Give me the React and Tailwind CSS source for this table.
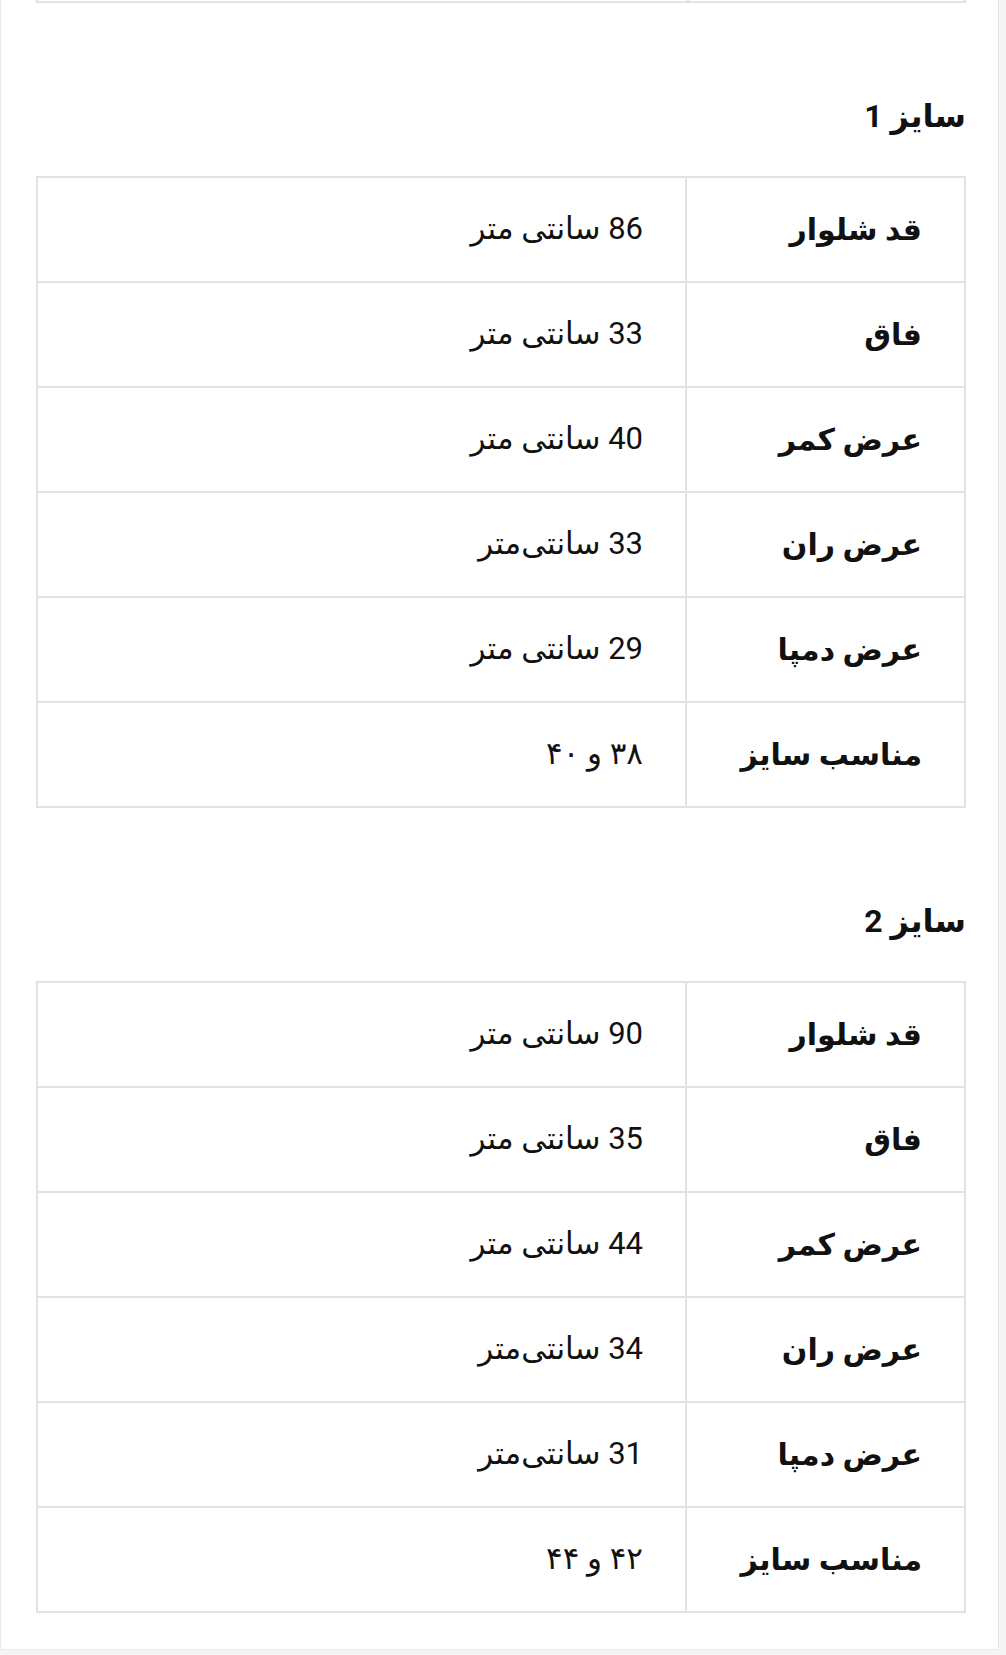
const sizes = [
  {
    title: 'سایز 1',
    rows: [
      { label: 'قد شلوار', value: '86 سانتی متر' },
      { label: 'فاق', value: '33 سانتی متر' },
      { label: 'عرض کمر', value: '40 سانتی متر' },
      { label: 'عرض ران', value: '33 سانتی‌متر' },
      { label: 'عرض دمپا', value: '29 سانتی متر' },
      { label: 'مناسب سایز', value: '۳۸ و ۴۰' },
    ],
  },
  {
    title: 'سایز 2',
    rows: [
      { label: 'قد شلوار', value: '90 سانتی متر' },
      { label: 'فاق', value: '35 سانتی متر' },
      { label: 'عرض کمر', value: '44 سانتی متر' },
      { label: 'عرض ران', value: '34 سانتی‌متر' },
      { label: 'عرض دمپا', value: '31 سانتی‌متر' },
      { label: 'مناسب سایز', value: '۴۲ و ۴۴' },
    ],
  },
];

const SizeTable = ({ title, rows }) => (
  <section>
    <h3 className="mt-[93px] mb-[40px] text-[32px] leading-[40px] font-bold text-[#111]">{title}</h3>
    <table className="w-full border-collapse border-2 border-[#e2e2e2]">
      <tbody>
        {rows.map((row) => (
          <tr key={row.label} className="h-[105px]">
            <td className="w-[279px] border-2 border-[#e2e2e2] pr-[42px] text-right align-middle text-[30px] font-semibold text-[#111]">
              {row.label}
            </td>
            <td className="border-2 border-[#e2e2e2] pr-[42px] text-right align-middle text-[31px] text-[#111]">
              {row.value}
            </td>
          </tr>
        ))}
      </tbody>
    </table>
  </section>
);

export default function App() {
  return (
    <div className="min-h-[1655px] bg-[#f4f4f4] font-['Roboto','DejaVu_Sans',sans-serif]">
      <div className="w-[999px] bg-white border-x border-b border-[#e8e8e8] pl-[35px] pr-[32px] pb-[36px]">
        <div dir="rtl">
          {/* tail of the previous table */}
          <div className="flex h-[3px]">
            <div className="w-[279px] border-x-2 border-b-2 border-[#e2e2e2]" />
            <div className="flex-1 border-l-2 border-b-2 border-[#e2e2e2]" />
          </div>
          {sizes.map((s) => (
            <SizeTable key={s.title} title={s.title} rows={s.rows} />
          ))}
        </div>
      </div>
    </div>
  );
}
